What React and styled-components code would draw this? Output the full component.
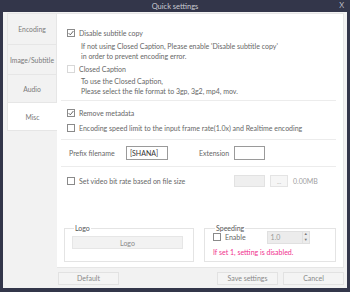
import React from "react";
import styled, { createGlobalStyle } from "styled-components";

const Global = createGlobalStyle`
  html, body { margin: 0; padding: 0; background: #2f3240; }
  * { box-sizing: border-box; }
  body { font-family: "Lato", "Liberation Sans", sans-serif; }
`;

const Window = styled.div`
  width: 350px;
  height: 292px;
  background: #33364a;
  display: flex;
  flex-direction: column;
  padding: 0 3px 4px 3px;
`;

const TitleBar = styled.div`
  height: 12px;
  position: relative;
  display: flex;
  align-items: center;
  justify-content: center;
  color: #c9cad2;
  font-size: 7.5px;
`;

const CloseX = styled.span`
  position: absolute;
  right: 3px;
  top: 1px;
  font-size: 7.5px;
  color: #b9bac4;
`;

const Body = styled.div`
  flex: 1;
  background: #f2f2f2;
  display: flex;
  flex-direction: column;
  padding: 1px 3px 0 4px;
`;

const Main = styled.div`
  display: flex;
  height: 255px;
`;

const Tabs = styled.div`
  width: 51px;
  display: flex;
  flex-direction: column;
`;

const Tab = styled.div`
  height: ${(p) => p.$h}px;
  display: flex;
  align-items: center;
  justify-content: center;
  font-size: 6.8px;
  white-space: nowrap;
  color: #7a7a7a;
  background: ${(p) => (p.$active ? "#ffffff" : "#f2f2f2")};
  border: 1px solid #e6e6e6;
  border-right: ${(p) => (p.$active ? "none" : "1px solid #e6e6e6")};
  margin-top: -1px;
  &:first-child { margin-top: 0; }
`;

const Panel = styled.div`
  flex: 1;
  background: #fff;
  border: 1px solid #e6e6e6;
  border-left: none;
  padding: 12px 7px 0 4px;
  display: flex;
  flex-direction: column;
  font-size: 7px;
  color: #666;
`;

const Row = styled.div`
  height: ${(p) => p.$h}px;
  display: flex;
  align-items: center;
  padding-left: ${(p) => p.$indent ?? 6}px;
  margin-top: ${(p) => p.$mt || 0}px;
  white-space: nowrap;
`;

const Note = styled.div`
  padding-left: 20px;
  line-height: 9.5px;
  color: #666;
  white-space: nowrap;
  margin-top: ${(p) => p.$mt || 0}px;
  margin-bottom: ${(p) => p.$mb || 0}px;
`;

const Sep = styled.div`
  height: 1px;
  flex: none;
  background: #ececec;
`;

const Box = styled.span`
  width: 8px;
  height: 8px;
  border: 1px solid ${(p) => (p.$light ? "#d8d8d8" : "#8a8a8a")};
  background: #fff;
  margin-right: 4px;
  display: inline-flex;
  align-items: center;
  justify-content: center;
  flex: none;
`;

const Check = ({ checked, light }) => (
  <Box $light={light}>
    {checked && (
      <svg width="6" height="6" viewBox="0 0 6 6">
        <path d="M0.6 3.1 L2.3 4.8 L5.4 1" fill="none" stroke="#555" strokeWidth="0.9" />
      </svg>
    )}
  </Box>
);

const Label = styled.span`
  color: ${(p) => (p.$dim ? "#a0a0a0" : "#666")};
  width: ${(p) => (p.$w ? p.$w + "px" : "auto")};
  flex: none;
`;

const TextInput = styled.div`
  width: ${(p) => p.$w}px;
  height: ${(p) => p.$hh || 14}px;
  border: 1px solid ${(p) => (p.$disabled ? "#e2e2e2" : "#9a9a9a")};
  background: ${(p) => (p.$disabled ? "#efefef" : "#fff")};
  color: #333;
  font-size: 7px;
  display: flex;
  align-items: center;
  padding-left: 3px;
  flex: none;
  margin-right: ${(p) => p.$mr || 0}px;
`;

const SmallBtn = styled.div`
  width: 18px;
  height: 12px;
  border: 1px solid #e4e4e4;
  background: #f6f6f6;
  color: #aaa;
  font-size: 6px;
  display: flex;
  align-items: center;
  justify-content: center;
  margin: 0 5px 0 5px;
`;

const Groups = styled.div`
  display: flex;
  margin-top: auto;
  margin-bottom: 5px;
  padding-left: 3px;
  gap: 10px;
`;

const Group = styled.fieldset`
  margin: 0;
  width: ${(p) => p.$w}px;
  height: 38px;
  border: 1px solid #e4e4e4;
  padding: 0 0 0 ${(p) => p.$pl}px;
  min-width: 0;
  display: flex;
  flex-direction: column;
`;

const Legend = styled.legend`
  font-size: 7px;
  color: #555;
  padding: 0 1px;
  margin-left: 2px;
  line-height: 8px;
`;

const WideBtn = styled.div`
  width: 111px;
  height: 13px;
  margin-top: 4px;
  background: #f2f2f2;
  border: 1px solid #e6e6e6;
  color: #8a8a8a;
  font-size: 7px;
  display: flex;
  align-items: center;
  justify-content: center;
`;

const Spin = styled.div`
  width: 43px;
  height: 13px;
  border: 1px solid #e0e0e0;
  background: #ececec;
  display: flex;
  align-items: center;
  justify-content: space-between;
  padding-left: 3px;
  color: #999;
  font-size: 7px;
  margin-left: 21px;
  flex: none;
`;

const SpinArrows = styled.div`
  width: 7px;
  height: 100%;
  border-left: 1px solid #e0e0e0;
  display: flex;
  flex-direction: column;
  align-items: center;
  justify-content: space-around;
  font-size: 4px;
  line-height: 4px;
  color: #777;
`;

const Warn = styled.div`
  color: #f0308e;
  font-size: 7px;
  line-height: 9px;
  margin-top: 7px;
  white-space: nowrap;
`;

const Footer = styled.div`
  flex: 1;
  display: flex;
  align-items: center;
  padding-left: 51px;
`;

const FootBtn = styled.div`
  width: 61px;
  height: 13px;
  border: 1px solid #e2e2e2;
  background: #f4f4f4;
  color: #888;
  font-size: 7px;
  display: flex;
  align-items: center;
  justify-content: center;
  margin-left: ${(p) => p.$ml || 0}px;
`;

export default function App() {
  return (
    <>
      <Global />
      <Window>
        <TitleBar>
          Quick settings
          <CloseX>X</CloseX>
        </TitleBar>
        <Body>
          <Main>
            <Tabs>
              <Tab $h={32}>Encoding</Tab>
              <Tab $h={31}>Image/Subtitle</Tab>
              <Tab $h={29}>Audio</Tab>
              <Tab $h={29} $active>Misc</Tab>
            </Tabs>
            <Panel>
              <Row $h={14}>
                <Check checked />
                Disable subtitle copy
              </Row>
              <Note $mt={2}>If not using Closed Caption, Please enable 'Disable subtitle copy'</Note>
              <Note>in order to prevent encoding error.</Note>
              <Row $h={16}>
                <Check light />
                <Label>Closed Caption</Label>
              </Row>
              <Note>To use the Closed Caption,</Note>
              <Note $mb={4}>Please select the file format to 3gp, 3g2, mp4, mov.</Note>
              <Sep />
              <Row $h={23}>
                <Check checked />
                Remove metadata
              </Row>
              <Row $h={7}>
                <Check />
                Encoding speed limit to the input frame rate(1.0x) and Realtime encoding
              </Row>
              <Row $h={8} />
              <Sep />
              <Row $h={26} $indent={8}>
                <Label $w={57}>Prefix filename</Label>
                <TextInput $w={42} $mr={31}>[SHANA]</TextInput>
                <Label $w={35}>Extension</Label>
                <TextInput $w={31} />
              </Row>
              <Sep />
              <Row $h={28}>
                <Check />
                <Label $w={155}>Set video bit rate based on file size</Label>
                <TextInput $w={31} $hh={12} $disabled />
                <SmallBtn>...</SmallBtn>
                <Label $dim>0.00MB</Label>
              </Row>
              <Groups>
                <Group $w={130} $pl={7}>
                  <Legend>Logo</Legend>
                  <WideBtn>Logo</WideBtn>
                </Group>
                <Group $w={132} $pl={8}>
                  <Legend>Speeding</Legend>
                  <Row $h={8} $indent={0} $mt={1}>
                    <Check />
                    <Label>Enable</Label>
                    <Spin>
                      1.0
                      <SpinArrows>
                        <span>▲</span>
                        <span>▼</span>
                      </SpinArrows>
                    </Spin>
                  </Row>
                  <Warn>If set 1, setting is disabled.</Warn>
                </Group>
              </Groups>
            </Panel>
          </Main>
          <Footer>
            <FootBtn>Default</FootBtn>
            <FootBtn $ml={98}>Save settings</FootBtn>
            <FootBtn $ml={5}>Cancel</FootBtn>
          </Footer>
        </Body>
      </Window>
    </>
  );
}
